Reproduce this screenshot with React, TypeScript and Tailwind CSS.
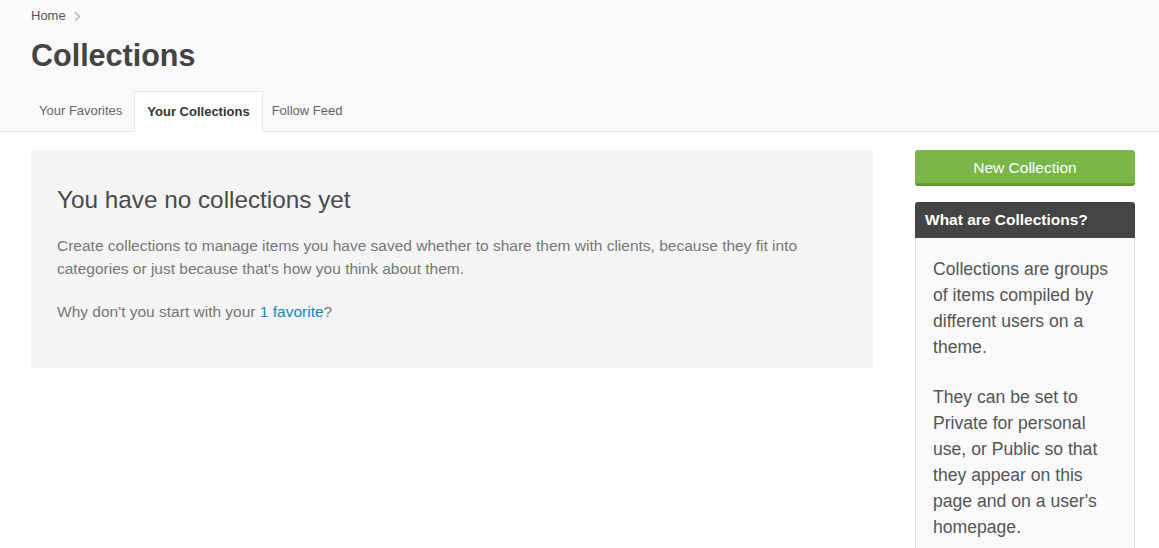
import React from "react";

export default function App() {
  return (
    <div className="min-h-[548px] bg-white text-[#555]" style={{ fontFamily: '"Liberation Sans", Arial, sans-serif' }}>
      <div className="bg-[#f9f9f9] border-b border-[#e3e6ea]">
        <div className="px-[31px] pt-[7px]">
          <div className="flex items-center gap-[8px] text-[13px] leading-[18px] text-[#555]">
            <span>Home</span>
            <svg width="7" height="11" viewBox="0 0 7 11" className="mt-[1px]">
              <path d="M1.2 1.2 L5.5 5.5 L1.2 9.8" fill="none" stroke="#b8b8b8" strokeWidth="1.6" />
            </svg>
          </div>
          <h1 className="mt-[12px] text-[30.5px] leading-[36px] font-bold text-[#444]">Collections</h1>
        </div>
        <div className="flex pl-[31px] mt-[18px] text-[13px]">
          <div className="pl-[8px] pr-[12px] h-[40px] flex items-center text-[#666]">Your Favorites</div>
          <div className="px-[12px] h-[41px] -mb-px flex items-center bg-white border border-b-0 border-[#e3e6ea] font-bold text-[#333]">
            Your Collections
          </div>
          <div className="pl-[9px] pr-[10px] h-[40px] flex items-center text-[#666]">Follow Feed</div>
        </div>
      </div>
      <div className="flex pl-[31px] pr-[24px] pt-[18px] gap-[42px]">
        <div className="flex-1 self-start bg-[#f4f4f4] rounded-[4px] px-[26px] pt-[34px] pb-[45px]">
          <h2 className="text-[24.3px] leading-[32px] text-[#4a4a4a]">You have no collections yet</h2>
          <p className="mt-[18px] text-[15.5px] leading-[23px] text-[#777]">
            Create collections to manage items you have saved whether to share them with clients, because they fit into
            categories or just because that's how you think about them.
          </p>
          <p className="mt-[20px] text-[15.5px] leading-[23px] text-[#777]">
            Why don't you start with your <a className="text-[#1a87b3]">1 favorite</a>?
          </p>
        </div>
        <div className="w-[220px] shrink-0">
          <button className="w-full h-[36px] rounded-[3px] bg-[#7ab648] border-b-[3px] border-[#5f9a35] text-white text-[15.5px] pt-[2px]">
            New Collection
          </button>
          <div className="mt-[16px] rounded-t-[3px] bg-[#444] h-[36px] flex items-center px-[10px] text-white text-[15.5px] font-bold">
            What are Collections?
          </div>
          <div className="bg-[#f9f9f9] border border-t-0 border-[#dde3ea] pl-[17px] pr-[14px] pt-[18px] pb-[20px] text-[17.6px] leading-[26px] text-[#555]">
            <p>Collections are groups of items compiled by different users on a theme.</p>
            <p className="mt-[24px]">
              They can be set to Private for personal use, or Public so that they appear on this page and on a user's
              homepage.
            </p>
          </div>
        </div>
      </div>
    </div>
  );
}
